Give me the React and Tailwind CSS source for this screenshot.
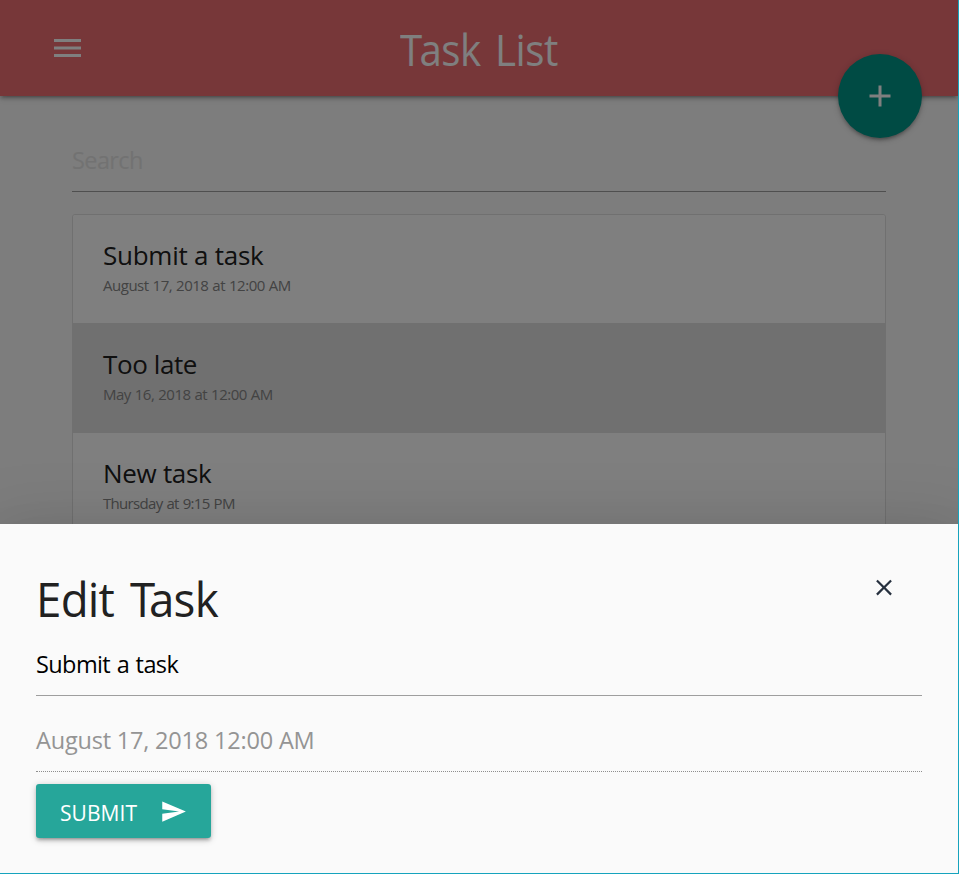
import React from 'react';

const tasks = [
  { title: 'Submit a task', date: 'August 17, 2018 at 12:00 AM', rowStyle: 'h-[108px] pt-[21px] bg-white', titleStyle: 'tracking-[-0.25px]', dateStyle: 'tracking-[-0.48px] [word-spacing:0.5px]' },
  { title: 'Too late', date: 'May 16, 2018 at 12:00 AM', rowStyle: 'h-[110px] pt-[22px] bg-[#e0e0e0]', titleStyle: 'tracking-[-0.4px]', dateStyle: 'tracking-[-0.49px] [word-spacing:0.5px]' },
  { title: 'New task', date: 'Thursday at 9:15 PM', rowStyle: 'h-[109px] pt-[21px] bg-white', titleStyle: 'tracking-[-0.3px]', dateStyle: 'tracking-[-0.68px] [word-spacing:0.7px]' },
];

function Icon({ d, className }) {
  return (
    <svg viewBox="0 0 24 24" fill="currentColor" aria-hidden="true" className={className}>
      <path d={d} />
    </svg>
  );
}

function Header() {
  return (
    <header className="relative flex h-24 items-center bg-[#ee6e73] text-white shadow-[0_3px_3px_0_rgba(0,0,0,0.14),0_4.5px_1.5px_-3px_rgba(0,0,0,0.12),0_1.5px_7.5px_0_rgba(0,0,0,0.2)]">
      <button className="ml-[49px] size-9" aria-label="Menu">
        <Icon className="size-9 translate-x-[0.5px]" d="M3 18h18v-2H3v2zm0-5h18v-2H3v2zm0-7v2h18V6H3z" />
      </button>
      <h1 className="ml-[315px] origin-left scale-x-[0.915] whitespace-nowrap pt-[3px] text-[44px] leading-[93px] tracking-[-0.5px] [word-spacing:4.5px]">
        <span className="tracking-[-3px]">T</span>ask List
      </h1>
      <button
        aria-label="Add task"
        className="absolute right-[36px] top-[54px] flex size-[84px] items-center justify-center rounded-full bg-[#009688] shadow-[0_3px_3px_0_rgba(0,0,0,0.14),0_4.5px_1.5px_-3px_rgba(0,0,0,0.12),0_1.5px_7.5px_0_rgba(0,0,0,0.2)]"
      >
        <Icon className="size-9" d="M19 13h-6v6h-2v-6H5v-2h6V5h2v6h6v2z" />
      </button>
    </header>
  );
}

function TaskRow({ task }) {
  return (
    <li className={`px-[30px] ${task.rowStyle}`}>
      <div className={`w-fit whitespace-nowrap text-[26px] leading-[39px] text-[#212121] ${task.titleStyle}`}>{task.title}</div>
      <div className={`w-fit whitespace-nowrap text-[15px] leading-[20px] text-[#868686] ${task.dateStyle}`}>{task.date}</div>
    </li>
  );
}

function EditSheet() {
  return (
    <section className="absolute inset-x-0 bottom-0 h-[349px] bg-[#fafafa] px-9 pt-[45px] shadow-[0_36px_57px_4.5px_rgba(0,0,0,0.14),0_13.5px_69px_12px_rgba(0,0,0,0.12),0_16.5px_22.5px_-10.5px_rgba(0,0,0,0.2)]">
      <div className="flex h-[60px] items-start justify-between">
        <h2 className="origin-left scale-x-[0.952] whitespace-nowrap text-[48px] leading-[60px] tracking-[-0.8px] text-[#212121] [word-spacing:5px]">
          Edit <span className="tracking-[-6.5px]">T</span>ask
        </h2>
        <button className="mr-[25px] mt-[5px] text-[#26303e]" aria-label="Close">
          <Icon className="size-[27px] translate-x-[0.5px]" d="M19 6.41L17.59 5 12 10.59 6.41 5 5 6.41 10.59 12 5 17.59 6.41 19 12 13.41 17.59 19 19 17.59 13.41 12z" />
        </button>
      </div>
      <div className="h-[67px] w-[886px] border-b border-[#9e9e9e] pt-[17px]">
        <span className="whitespace-nowrap text-[23.5px] leading-[36px] tracking-[-0.6px] text-black [word-spacing:1px]">Submit a task</span>
      </div>
      <div className="h-[76px] w-[886px] border-b border-dotted border-[#8e8e8e] pt-[26px]">
        <span className="whitespace-nowrap text-[23.5px] leading-[36px] tracking-[-0.19px] text-[#949494]">August 17, 2018 12:00 AM</span>
      </div>
      <button className="mt-3 flex h-[54px] w-[175px] items-center rounded-[3px] bg-[#26a69a] pl-6 text-white shadow-[0_3px_3px_0_rgba(0,0,0,0.14),0_4.5px_1.5px_-3px_rgba(0,0,0,0.12),0_1.5px_7.5px_0_rgba(0,0,0,0.2)]">
        <span className="w-[100px] whitespace-nowrap pt-[4px] text-left text-[21px] leading-[50px] tracking-[0.05px]">SUBMIT</span>
        <Icon className="size-[27px]" d="M2.01 21L23 12 2.01 3 2 10l15 2-15 2z" />
      </button>
    </section>
  );
}

export default function App() {
  return (
    <div className="h-[874px] w-[959px] overflow-hidden border-b border-r border-[#16a3bd] font-['Open_Sans','Noto_Sans',sans-serif]">
      <div className="relative h-full overflow-hidden bg-[#fafafa]">
        <Header />
        <main className="ml-[72px] w-[814px]">
          <div className="flex h-24 items-end border-b border-[#9e9e9e] pb-[13px]">
            <span className="whitespace-nowrap text-[23.5px] leading-[36px] tracking-[-0.6px] text-[#e4e4e4]">Search</span>
          </div>
          <ul className="mt-[22px] overflow-hidden rounded-[3px] border border-[#e0e0e0]">
            {tasks.map((task) => (
              <TaskRow key={task.title} task={task} />
            ))}
          </ul>
        </main>
        <div className="absolute inset-0 bg-black/50" />
        <EditSheet />
      </div>
    </div>
  );
}
